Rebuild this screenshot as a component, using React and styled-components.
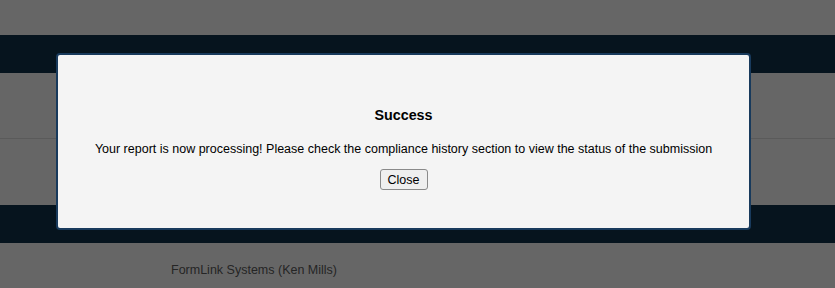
import React, { useState } from 'react';
import styled, { createGlobalStyle } from 'styled-components';

const GlobalStyle = createGlobalStyle`
  html, body {
    margin: 0;
    padding: 0;
    background: #ffffff;
    font-family: "Liberation Sans", Arial, sans-serif;
  }
`;

const Page = styled.div`
  display: flex;
  flex-direction: column;
  min-height: 288px;
`;

const TopSpace = styled.div`
  height: 35px;
`;

const NavBar = styled.div`
  height: 38px;
  background: #0f324b;
`;

const Row = styled.div`
  height: ${props => props.height}px;
  box-sizing: border-box;
  border-bottom: ${props => (props.divider ? '1px solid #e2e2e2' : 'none')};
  display: flex;
  align-items: center;
  padding: ${props => props.offset || 0}px 0 0 171px;
  font-size: 12.5px;
  color: #5c5c5c;
`;

const Overlay = styled.div`
  position: fixed;
  inset: 0;
  background: rgba(0, 0, 0, 0.6);
`;

const Modal = styled.div`
  position: absolute;
  left: 56px;
  top: 53px;
  width: 691px;
  box-sizing: content-box;
  border: 2px solid #183a5c;
  border-radius: 4px;
  background: #f4f4f4;
  padding: 51px 0 38px;
  display: flex;
  flex-direction: column;
  align-items: center;
`;

const Title = styled.h3`
  margin: 0;
  font-size: 14.3px;
  line-height: 18px;
  font-weight: bold;
  color: #000;
`;

const Message = styled.p`
  margin: 16.5px 0 12.5px;
  font-size: 12.5px;
  line-height: 16px;
  white-space: nowrap;
  color: #000;
`;

const CloseButton = styled.button`
  width: 48px;
  height: 21px;
  padding: 0;
  font-family: "Liberation Sans", Arial, sans-serif;
  font-size: 12.5px;
  color: #000;
  background: #efefef;
  border: 1px solid #8a8a8a;
  border-radius: 3px;
  cursor: pointer;
`;

export default function App() {
  const [open, setOpen] = useState(true);

  return (
    <>
      <GlobalStyle />
      <Page>
        <TopSpace />
        <NavBar />
        <Row height={66} divider />
        <Row height={66} />
        <NavBar />
        <Row height={45} offset={9}>FormLink Systems (Ken Mills)</Row>
      </Page>
      {open && (
        <Overlay>
          <Modal>
            <Title>Success</Title>
            <Message>
              Your report is now processing! Please check the compliance history section to view the status of the submission
            </Message>
            <CloseButton onClick={() => setOpen(false)}>Close</CloseButton>
          </Modal>
        </Overlay>
      )}
    </>
  );
}
